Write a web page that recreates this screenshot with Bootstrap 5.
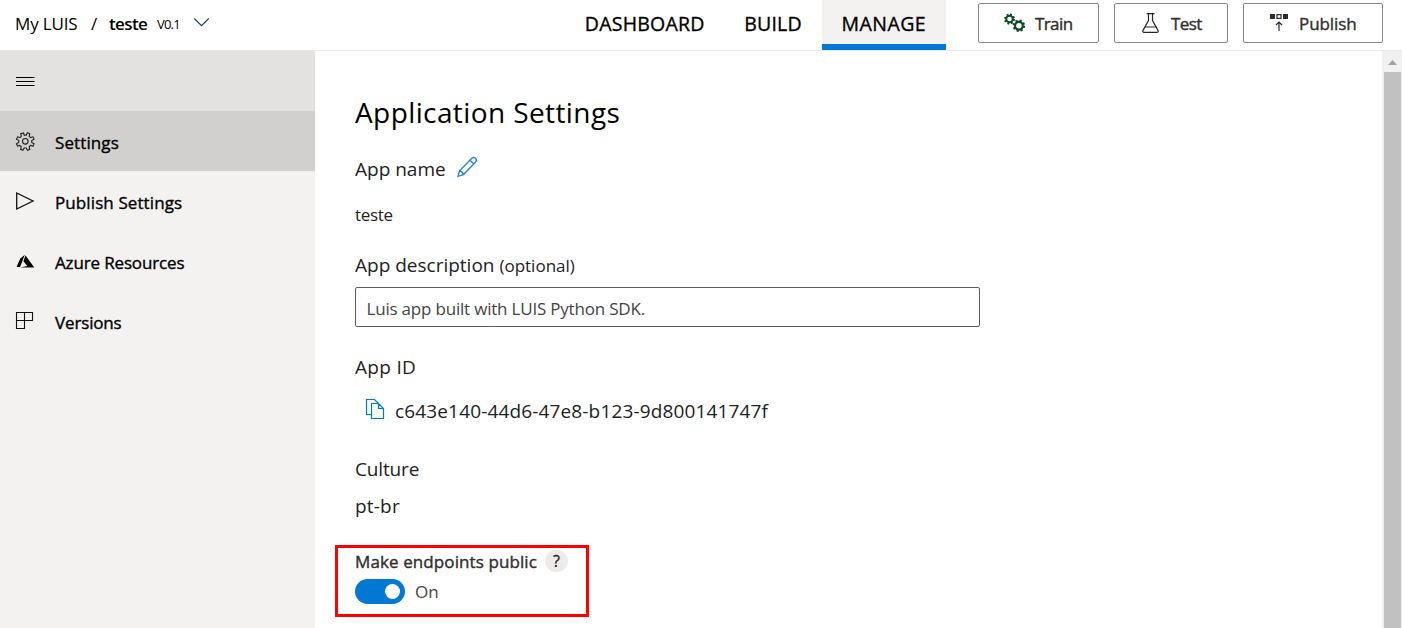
<!DOCTYPE html>
<html lang="en">
<head>
<meta charset="utf-8">
<meta name="viewport" content="width=device-width, initial-scale=1">
<title>Application Settings</title>
<link href="https://cdn.jsdelivr.net/npm/bootstrap@5.3.0/dist/css/bootstrap.min.css" rel="stylesheet">
<script src="https://cdn.jsdelivr.net/npm/bootstrap@5.3.0/dist/js/bootstrap.bundle.min.js" defer></script>
<style>
body{font-family:"Open Sans","Noto Sans",sans-serif;font-size:17px;color:#000;height:100vh;overflow:hidden;background:#fff}
svg{display:block;flex:none}
.topbar{height:51px;border-bottom:1px solid #eaeaea;white-space:nowrap}
.crumbs{width:565px;padding-left:15px;line-height:48px;height:48px}
.crumb-root{width:76px;letter-spacing:-.15px}
.crumb-sep{width:18px}
.crumb-app{width:48px;font-weight:600;letter-spacing:-.6px}
.crumb-ver{width:36px;font-size:13px;letter-spacing:-.8px}
.tab-link{height:50px;padding:0 19.8px 0 19.8px;line-height:48px;font-size:19.5px;letter-spacing:.22px;color:#000;-webkit-text-stroke:.35px #000}
.tab-link.active{background:#f3f2f1;border-bottom:6px solid #0078d7;letter-spacing:.45px}
.actions{padding:3px 19px 0 0;gap:15px}
.act-btn{height:40px;border:1px solid #8a8886;border-radius:2px;font-size:17px;line-height:24px;color:#323130;padding:0;background:#fff;-webkit-text-stroke:.4px #323130}
.act-btn span{padding-top:1px}
.act-train{width:121px;padding-left:25px;letter-spacing:-.6px}
.act-test{width:114px;padding-left:27px;letter-spacing:-.6px}
.act-publish{width:140px;padding-left:26px;letter-spacing:-.1px}
.side{width:315px;background:#f3f2f1}
.side-row{height:60px;padding-left:15px;color:#000;white-space:nowrap;text-decoration:none;letter-spacing:.1px;-webkit-text-stroke:.35px #000}
.side-row svg{margin-right:20px}
.side-row span{padding-top:3px}
.side-row.tight{letter-spacing:-.15px}
.side-toggle{background:#e3e2e0}
.side-row.active{background:#d2d0ce}
.pane{padding-left:20px}
.inset{padding-left:20px}
.page-title{font-size:28px;line-height:40px;margin:41px 0 23px;font-weight:400;letter-spacing:.4px}
.fld{font-size:19px;line-height:28px;color:#222}
.val{font-size:17px;line-height:24px;color:#222}
.app-value{margin-top:20px;letter-spacing:-.3px}
.gap-desc{margin-top:24px}
.gap-id{margin-top:26px;letter-spacing:.3px}
.gap-culture{margin-top:30px;letter-spacing:-.15px}
.gap-code{margin-top:9px;letter-spacing:.2px}
.desc{width:625px;height:40px;border:1px solid #605e5c;border-radius:2px;color:#444;font-size:17px;padding:2px 10.5px 0;letter-spacing:-.2px}
.guid{letter-spacing:.15px}
.marked{width:254px;height:72px;border:3px solid #f00;margin-top:25px;padding:2px 0 0 17px}
.marked-label{font-size:17px;line-height:24px;letter-spacing:.1px;color:#323130;width:190px;white-space:nowrap;-webkit-text-stroke:.4px #323130}
.help{width:23px;height:22px;border-radius:50%;background:#edebe9;font-size:16px;line-height:22px;color:#222;-webkit-text-stroke:.3px #222}
.switch-row{margin-top:5px}
.switch-pill{width:50px;height:25px;border-radius:13px;background:#0078d4;padding-right:5px}
.knob{width:15px;height:15px;border-radius:50%;background:#fff}
.state{padding-left:10px;color:#444;line-height:25px}
.sbar{width:20px;background:#f1f1f1;padding:9px 1px 0 2px}
.thumb{width:17px;background:#c1c1c1;margin-top:7px}
</style>
</head>
<body class="d-flex flex-column">
<header class="topbar d-flex flex-shrink-0">
  <div class="crumbs d-flex flex-shrink-0">
    <span class="crumb-root">My LUIS</span><span class="crumb-sep">/</span><span class="crumb-app">teste</span><span class="crumb-ver">V0.1</span>
    <svg class="mt-3" width="16" height="12" viewBox="0 0 16 12" fill="none" stroke="#1f3b57" stroke-width="1.1"><path d="M1.300 2.500 8.500 9.700 15.700 2.500"/></svg>
  </div>
  <nav class="d-flex">
    <a class="tab-link text-decoration-none">DASHBOARD</a><a class="tab-link text-decoration-none">BUILD</a><a class="tab-link active text-decoration-none">MANAGE</a>
  </nav>
  <div class="actions d-flex ms-auto">
    <button class="act-btn act-train d-flex align-items-center">
      <svg width="31" height="20" viewBox="0 0 31 20" fill="none" stroke="#0b4a22"><circle cx="5.5" cy="6" r="3.3" stroke-width="2"/><circle cx="5.5" cy="6" r="4.5" stroke-width="1.9" stroke-dasharray="1.9 1.634"/><circle cx="14.9" cy="12.7" r="3.9" stroke-width="2.2"/><circle cx="14.9" cy="12.7" r="5.3" stroke-width="1.9" stroke-dasharray="2.2 1.963"/></svg>
      <span>Train</span></button>
    <button class="act-btn act-test d-flex align-items-center">
      <svg width="29" height="20" viewBox="0 0 29 20" fill="none" stroke="#26262e" stroke-width="1.2"><path d="M4.500.7h8M6.500.7v6.800L1 17.400c-.5 1 0 1.900 1 1.900h13c1 0 1.500-.9 1-1.900L10.500 7.500V.7M3.500 14h10"/></svg>
      <span>Test</span></button>
    <button class="act-btn act-publish d-flex align-items-center">
      <svg width="29" height="18" viewBox="0 0 29 18"><path fill="#2b2b2b" d="M0 0h5v5H0zM13 0h5v5h-5z"/><path fill="none" stroke="#333" stroke-width="1.3" d="M7 .65h4v3.7H7z"/><path fill="none" stroke="#2b2350" stroke-width="1.2" d="M9 17V8M6 11l3-3 3 3"/></svg>
      <span>Publish</span></button>
  </div>
</header>
<div class="d-flex flex-grow-1">
  <aside class="side flex-shrink-0">
    <div class="side-row side-toggle d-flex align-items-center">
      <svg width="20" height="12" viewBox="0 0 20 12" stroke="#000" stroke-width="1"><path d="M1 2.500h18.500M1 6.500h18.500M1 10.500h18.500"/></svg>
    </div>
    <a class="side-row active d-flex align-items-center">
      <svg width="20" height="20" viewBox="0 0 20 20" fill="none" stroke="#222" stroke-width="1.1"><path d="M8.600 1.600 9.200 3.700h2l1.200-2.300 2.300 1-.6 2.400 1.300 1.300 2.500-.7.9 2.300-2.200 1.300v2l2.200 1.300-.9 2.200-2.500-.6-1.300 1.300.6 2.500-2.300.9-1.200-2.200h-2l-1.300 2.200-2.200-.9.600-2.500-1.300-1.300-2.400.6-1-2.200L3.900 11V9L1.700 7.700l1-2.300 2.400.7 1.300-1.300-.6-2.500z" transform="translate(-.2 .3) scale(1.02)"/><circle cx="10.300" cy="10.300" r="2.800"/></svg>
      <span>Settings</span></a>
    <a class="side-row d-flex align-items-center">
      <svg width="20" height="20" viewBox="0 0 20 20" fill="none" stroke="#111" stroke-width="1.3"><path d="M1.700 2v16L18 10z"/></svg>
      <span>Publish Settings</span></a>
    <a class="side-row tight d-flex align-items-center">
      <svg width="20" height="20" viewBox="0 0 20 20"><path d="M9.800 3.800 5.300 7.600 1.500 16h3.600zM10.500 4.400 8.400 10.200l3.900 4.800-7 1.500H19.300z"/></svg>
      <span>Azure Resources</span></a>
    <a class="side-row tight d-flex align-items-center">
      <svg width="20" height="20" viewBox="0 0 20 20" fill="none" stroke="#111" stroke-width="1.1"><path d="M1.500 1.500h16v8h-16zM1.500 9.500v8h8v-16"/></svg>
      <span>Versions</span></a>
  </aside>
  <main class="flex-grow-1 pane">
    <div class="inset">
      <h1 class="page-title">Application Settings</h1>
      <div class="fld d-flex"><span>App name</span>
        <svg class="ms-2" width="26" height="24" viewBox="0 0 26 24" fill="none" stroke="#2a86d8" stroke-width="1.4"><path d="M4 21.300 5.600 15.800 17.800 3.300c2.500-2.300 6.100 1.200 3.800 3.800L9.500 19.600zM5.600 15.800c2 .4 3.300 1.700 3.900 3.800M16 5.200l3.900 3.800"/></svg>
      </div>
      <div class="val app-value">teste</div>
      <div class="fld gap-desc">App description <span class="val">(optional)</span></div>
      <input class="desc d-block mt-2" value="Luis app built with LUIS Python SDK.">
      <div class="fld gap-id">App ID</div>
      <div class="fld d-flex mt-3">
        <svg width="40" height="24" viewBox="0 0 40 24" fill="none" stroke="#0078d4" stroke-width="1.2"><path d="M16.500 17.500h-5v-15h8l4 4M16.500 6.500h7l5 5v10h-12zM23.500 6.500v5h5"/></svg>
        <span class="guid">c643e140-44d6-47e8-b123-9d800141747f</span>
      </div>
      <div class="fld gap-culture">Culture</div>
      <div class="fld gap-code">pt-br</div>
    </div>
    <section class="marked">
      <div class="d-flex"><span class="marked-label">Make endpoints public</span><span class="help text-center">?</span></div>
      <div class="switch-row d-flex"><span class="switch-pill d-flex align-items-center justify-content-end"><span class="knob"></span></span><span class="val state">On</span></div>
    </section>
  </main>
  <div class="sbar d-flex flex-column">
    <svg class="mx-auto" width="9" height="5" viewBox="0 0 9 5"><path fill="#a3a3a3" d="M0 5 4.500 0 9 5z"/></svg>
    <div class="thumb flex-grow-1"></div>
  </div>
</div>
</body>
</html>
